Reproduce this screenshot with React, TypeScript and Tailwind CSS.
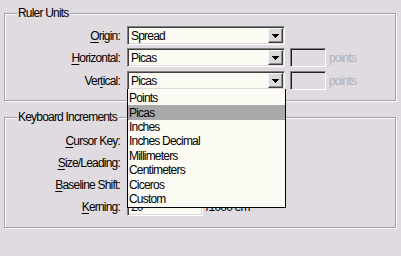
import React from "react";

const FONT =
  "font-[family-name:'Liberation_Sans_Narrow','Liberation_Sans',Arial,sans-serif] tracking-[-0.8px]";

function Mn({ text, idx }: { text: string; idx: number }) {
  return (
    <>
      {text.slice(0, idx)}
      <span className="underline underline-offset-[2px] decoration-1">{text[idx]}</span>
      {text.slice(idx + 1)}
    </>
  );
}

function Arrow() {
  return (
    <svg width="7" height="4" viewBox="0 0 7 4" shapeRendering="crispEdges">
      <rect x="0" y="0" width="7" height="1" fill="#000" />
      <rect x="1" y="1" width="5" height="1" fill="#000" />
      <rect x="2" y="2" width="3" height="1" fill="#000" />
      <rect x="3" y="3" width="1" height="1" fill="#000" />
    </svg>
  );
}

function Combo({ value }: { value: string }) {
  return (
    <div className="flex h-[19px] w-[158px] border border-t-[#808080] border-l-[#808080] border-r-white border-b-white bg-[#fbfaf3] shadow-[inset_1px_1px_0_#404040,inset_-1px_-1px_0_#dcd8dc] pl-[2px] pt-[1px] pr-[1px] pb-[1px]">
      <div className="flex-1 flex items-center pl-[1px] text-black">{value}</div>
      <div className="flex h-[15px] w-[15px] items-center justify-center border border-t-[#f6f6f6] border-l-[#f6f6f6] border-r-[#404040] border-b-[#404040] bg-[#dcd8dc] shadow-[inset_-1px_-1px_0_#8c8c8c]">
        <Arrow />
      </div>
    </div>
  );
}

function Field({ w, value }: { w: string; value?: string }) {
  return (
    <div
      className={`flex h-[19px] ${w} items-center border border-t-[#808080] border-l-[#808080] border-r-white border-b-white bg-[#fbfaf3] shadow-[inset_1px_1px_0_#404040,inset_-1px_-1px_0_#dcd8dc] pl-[3px]`}
    >
      {value}
    </div>
  );
}

function DisabledField() {
  return (
    <div className="h-[19px] w-[36px] border border-t-[#808080] border-l-[#808080] border-r-white border-b-white shadow-[inset_1px_1px_0_#202020]" />
  );
}

function Group({
  title,
  h,
  pt,
  className,
  children,
}: {
  title: string;
  h: string;
  pt: string;
  className?: string;
  children: React.ReactNode;
}) {
  return (
    <div
      className={`relative w-[392px] ${h} ${pt} border border-[#a4a2a6] shadow-[inset_1px_1px_0_#fbfbfb,1px_1px_0_#fbfbfb] ${className ?? ""}`}
    >
      <div className="absolute left-[12px] top-[-8px] h-[14px] bg-[#dfdbe1] px-[1px] leading-[14px] text-black">
        {title}
      </div>
      {children}
    </div>
  );
}

function Label({ children }: { children: React.ReactNode }) {
  return <div className="w-[115px] text-right text-black">{children}</div>;
}

const items = [
  "Points",
  "Picas",
  "Inches",
  "Inches Decimal",
  "Millimeters",
  "Centimeters",
  "Ciceros",
  "Custom",
];

export default function App() {
  return (
    <div
      className={`relative h-[256px] w-[401px] overflow-hidden bg-[#dfdbe1] px-[4px] pt-[13px] text-[12px] leading-[14px] ${FONT}`}
    >
      <Group title="Ruler Units" h="h-[88px]" pt="pt-[12px]">
        <div className="flex flex-col">
          <div className="flex h-[19px] items-center">
            <Label>
              <Mn text="Origin:" idx={0} />
            </Label>
            <div className="ml-[7px]">
              <Combo value="Spread" />
            </div>
          </div>
          <div className="mt-[3px] flex h-[19px] items-center">
            <Label>
              <Mn text="Horizontal:" idx={0} />
            </Label>
            <div className="ml-[7px]">
              <Combo value="Picas" />
            </div>
            <div className="ml-[5px]">
              <DisabledField />
            </div>
            <div className="ml-[3px] text-[#b3b0b6]">points</div>
          </div>
          <div className="mt-[4px] flex h-[19px] items-center">
            <Label>
              <Mn text="Vertical:" idx={3} />
            </Label>
            <div className="ml-[7px]">
              <Combo value="Picas" />
            </div>
            <div className="ml-[5px]">
              <DisabledField />
            </div>
            <div className="ml-[3px] text-[#b3b0b6]">points</div>
          </div>
        </div>
      </Group>

      <Group title="Keyboard Increments" h="h-[111px]" pt="pt-[13px]" className="mt-[16px]">
        <div className="flex flex-col gap-[3px]">
          <div className="flex h-[19px] items-center">
            <Label>
              <Mn text="Cursor Key:" idx={0} />
            </Label>
            <div className="ml-[7px]">
              <Field w="w-[76px]" />
            </div>
          </div>
          <div className="flex h-[19px] items-center">
            <Label>
              <Mn text="Size/Leading:" idx={0} />
            </Label>
            <div className="ml-[7px]">
              <Field w="w-[76px]" />
            </div>
          </div>
          <div className="flex h-[19px] items-center">
            <Label>
              <Mn text="Baseline Shift:" idx={0} />
            </Label>
            <div className="ml-[7px]">
              <Field w="w-[76px]" />
            </div>
          </div>
          <div className="flex h-[19px] items-center">
            <Label>
              <Mn text="Kerning:" idx={0} />
            </Label>
            <div className="ml-[7px]">
              <Field w="w-[76px]" value="20" />
            </div>
            <div className="ml-[3px] text-black">/1000 em</div>
          </div>
        </div>
      </Group>

      <div className="absolute left-[127px] top-[89px] flex h-[119px] w-[159px] flex-col border-x border-b border-black bg-[#fbfaf3] pt-[2px]">
        {items.map((it) => (
          <div
            key={it}
            className={`flex h-[14.4px] items-center pl-[1px] text-black ${
              it === "Picas" ? "bg-[#a9a8ab]" : ""
            }`}
          >
            {it}
          </div>
        ))}
      </div>
    </div>
  );
}
